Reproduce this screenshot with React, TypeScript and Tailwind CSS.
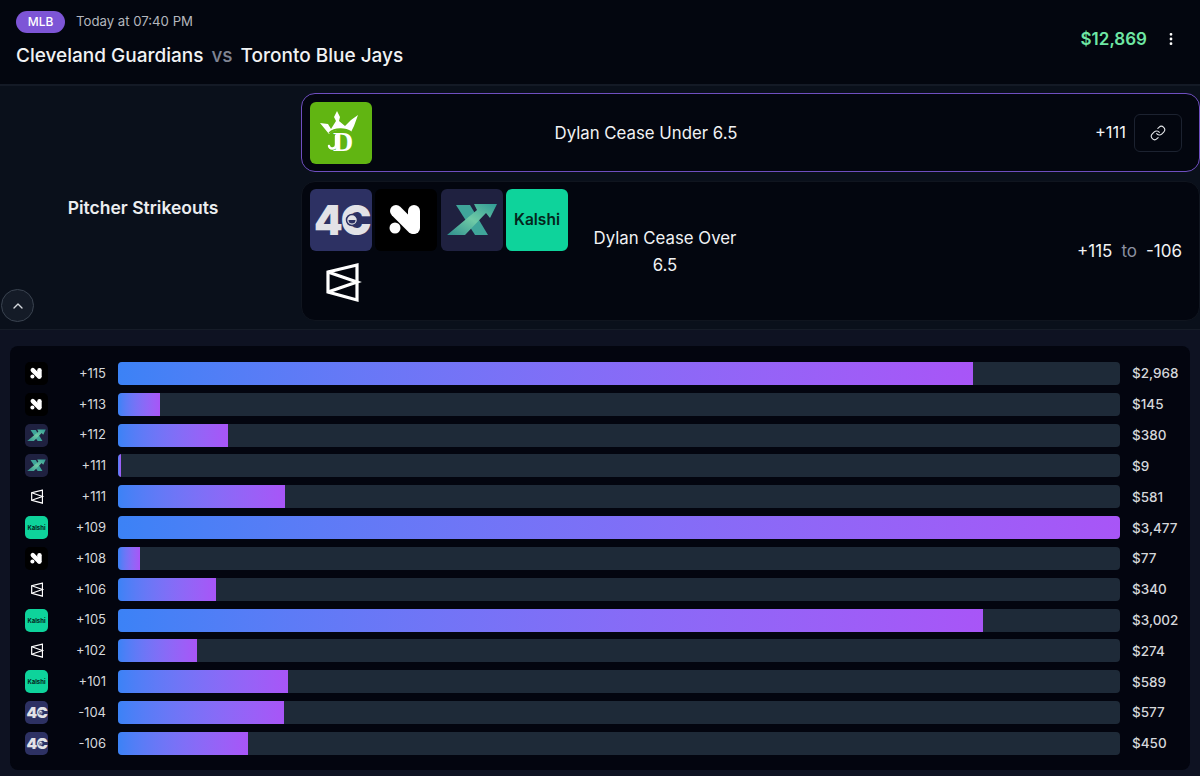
import { ChevronUp, Link, MoreVertical } from "lucide-react";

type Book = "fourc" | "novig" | "prophetx" | "kalshi" | "rebet";

const rows: { book: Book; odds: string; amount: number }[] = [
  { book: "novig", odds: "+115", amount: 2968 },
  { book: "novig", odds: "+113", amount: 145 },
  { book: "prophetx", odds: "+112", amount: 380 },
  { book: "prophetx", odds: "+111", amount: 9 },
  { book: "rebet", odds: "+111", amount: 581 },
  { book: "kalshi", odds: "+109", amount: 3477 },
  { book: "novig", odds: "+108", amount: 77 },
  { book: "rebet", odds: "+106", amount: 340 },
  { book: "kalshi", odds: "+105", amount: 3002 },
  { book: "rebet", odds: "+102", amount: 274 },
  { book: "kalshi", odds: "+101", amount: 589 },
  { book: "fourc", odds: "-104", amount: 577 },
  { book: "fourc", odds: "-106", amount: 450 },
];

const maxAmount = 3477;

/* ── Logos, all drawn on a 62 unit square ── */
function BookLogo({ book, small }: { book: Book; small?: boolean }) {
  const size = small ? "h-[23px] w-[23px] rounded-[5px]" : "h-[62px] w-[62px] rounded-[6px]";

  if (book === "fourc") {
    return (
      <svg className={`${size} shrink-0 bg-[#2d3163]`} viewBox="0 0 62 62">
        <text x="4" y="46" fontFamily="Inter, sans-serif" fontWeight="900" fontSize="41" letterSpacing="-2" fill="#e2e2e6">
          4C
        </text>
        <circle cx="42" cy="31" r="5.5" fill="#e2e2e6" stroke="#2d3163" strokeWidth="1.5" />
        <path d="M38.5 31h7a3.5 3.5 0 0 1-7 0z" fill="#2d3163" />
      </svg>
    );
  }
  if (book === "novig") {
    return (
      <svg className={`${size} shrink-0 bg-black`} viewBox="0 0 62 62">
        <line x1="21" y1="22" x2="38" y2="39" stroke="#fff" strokeWidth="12" strokeLinecap="round" />
        <line x1="39" y1="22" x2="39" y2="39" stroke="#fff" strokeWidth="12" strokeLinecap="round" />
        <circle cx="20" cy="39" r="5.5" fill="#fff" />
      </svg>
    );
  }
  if (book === "prophetx") {
    return (
      <svg className={`${size} shrink-0 bg-[#1f2140]`} viewBox="0 0 62 62">
        <defs>
          <linearGradient id="xBand" x1="0" y1="1" x2="1" y2="0">
            <stop offset="0" stopColor="#2f8f8e" />
            <stop offset="0.5" stopColor="#6fcaa6" />
            <stop offset="1" stopColor="#2f9a94" />
          </linearGradient>
        </defs>
        <polygon points="15,16 29,16 47,46 34,46" fill="#3fa59a" />
        <polygon points="6,46 36,21 33,15 56,15 49,29 45,24 24,46" fill="url(#xBand)" />
      </svg>
    );
  }
  if (book === "kalshi") {
    return (
      <div className={`${size} flex shrink-0 items-center justify-center bg-[#0ed39b]`}>
        <span className={small ? "text-[6px] font-bold text-[#04261c]" : "text-[15.5px] font-semibold text-[#04261c]"}>
          Kalshi
        </span>
      </div>
    );
  }
  return (
    <svg className={`${size} shrink-0`} viewBox="0 0 62 62" fill="none" stroke="#fff" strokeWidth="3.2" strokeLinejoin="miter">
      <path d="M47 14 18 21v20l29 8z" />
      <path d="M18 21 47 31 18 41" />
    </svg>
  );
}

function DraftKingsLogo() {
  return (
    <svg className="h-[62px] w-[62px] shrink-0 rounded-[6px] bg-[#61b512]" viewBox="0 0 62 62">
      <path
        d="M10 21l8 1 3 5 5-8-2-4 3-6 3 6-1 4 6 5 6-6 7-5-4 11-3 6c-7-4-17-3-22 2-3-4-6-7-9-11z"
        fill="#fff"
      />
      <path d="M19 31c6-5 16-5 22-1" fill="none" stroke="#61b512" strokeWidth="1.6" />
      <text x="33" y="49" textAnchor="middle" fontFamily="'Liberation Serif', serif" fontWeight="700" fontSize="28" fill="#fff">
        D
      </text>
      <path d="M26 34v9c0 4-6 5-7 1" fill="none" stroke="#fff" strokeWidth="2.4" strokeLinecap="round" />
    </svg>
  );
}

export default function App() {
  return (
    <div className="flex h-[776px] w-[1200px] flex-col overflow-hidden bg-[#0e1222] font-['Inter',sans-serif] text-white">
      {/* Header */}
      <div className="flex h-[86px] shrink-0 items-start justify-between border-b-2 border-[#141a26] bg-[#03060f] pl-4 pr-[21px] pt-[11px]">
        <div>
          <div className="flex items-center gap-[11px]">
            <span className="flex h-[22px] w-[49px] items-center justify-center rounded-full bg-[#7d55d6] text-[12px] font-medium">
              MLB
            </span>
            <span className="text-[13.2px] text-[#b4b7be]">Today at 07:40 PM</span>
          </div>
          <div className="mt-[10px] flex items-center gap-2 text-[19px] font-medium leading-[26px] text-[#f1f2f4]">
            <span>Cleveland Guardians</span>
            <span className="text-[#7f8493]">vs</span>
            <span>Toronto Blue Jays</span>
          </div>
        </div>
        <div className="mt-[17px] flex items-center gap-4">
          <span className="text-[17px] font-semibold leading-[22px] text-[#6ee7a4]">$12,869</span>
          <MoreVertical className="h-4 w-4 text-white" strokeWidth={2.2} />
        </div>
      </div>

      {/* Market */}
      <div className="relative flex h-[244px] shrink-0 border-b border-[#161c28] bg-[#0a101b] pb-[8px] pt-[7px]">
        <div className="flex w-[301px] shrink-0 items-start justify-center pt-[103px]">
          <span className="mr-[15px] text-[17.5px] font-semibold leading-[24px] text-[#eceef0]">Pitcher Strikeouts</span>
        </div>
        <div className="flex flex-1 flex-col gap-[9px]">
          <div className="flex h-[79px] items-center rounded-[14px] border border-[#6f4fc0] bg-[#03060f] pl-2 pr-[17px]">
            <DraftKingsLogo />
            <div className="w-[548px] pt-[2px] text-center text-[16.8px] text-[#f1f2f4]">Dylan Cease Under 6.5</div>
            <div className="ml-auto flex items-center gap-2">
              <span className="text-[16.5px] text-[#f1f2f4]">+111</span>
              <button className="flex h-[38px] w-[48px] items-center justify-center rounded-md border border-[#1c2230]">
                <Link className="h-4 w-4 text-[#e5e7eb]" strokeWidth={1.6} />
              </button>
            </div>
          </div>
          <div className="flex h-[140px] items-center rounded-[14px] border border-[#10151f] bg-[#03060f] pl-2 pr-[17px]">
            <div className="flex w-[262px] shrink-0 flex-wrap gap-x-[3.33px] self-start pt-[7px]">
              <BookLogo book="fourc" />
              <BookLogo book="novig" />
              <BookLogo book="prophetx" />
              <BookLogo book="kalshi" />
              <BookLogo book="rebet" />
            </div>
            <div className="ml-[13px] w-[160px] pt-[1px] text-center text-[16.8px] leading-[27px] text-[#f1f2f4]">
              Dylan Cease Over 6.5
            </div>
            <div className="ml-auto flex items-center gap-[9px] pt-[1px] text-[17px] text-[#f1f2f4]">
              <span>+115</span>
              <span className="text-[#8b90a0]">to</span>
              <span>-106</span>
            </div>
          </div>
        </div>
        <button className="absolute bottom-[7px] left-[1px] flex h-[33px] w-[33px] items-center justify-center rounded-full border border-[#3a4350] bg-[#141b27]">
          <ChevronUp className="h-4 w-4 text-[#d5d8dd]" strokeWidth={2} />
        </button>
      </div>

      {/* Volume by price */}
      <div className="px-[10px] pt-4">
        <div className="flex flex-col gap-[7.83px] rounded-lg bg-[#03050f] pb-[15px] pl-[15px] pr-[12px] pt-4">
          {rows.map((row, i) => (
            <div key={i} className="flex h-[23px] items-center">
              <BookLogo book={row.book} small />
              <span className="w-[58px] shrink-0 text-right text-[13px] text-[#d5d7db]">{row.odds}</span>
              <div className="ml-3 h-[23px] flex-1 overflow-hidden rounded-[4px] bg-[#1e2a38]">
                <div
                  className="h-full bg-gradient-to-r from-[#3b82f6] to-[#a855f7]"
                  style={{ width: `${(row.amount / maxAmount) * 100}%` }}
                />
              </div>
              <span className="ml-3 w-[46px] shrink-0 whitespace-nowrap text-[13.5px] font-medium text-[#d5d7db]">
                ${row.amount.toLocaleString("en-US")}
              </span>
            </div>
          ))}
        </div>
      </div>
    </div>
  );
}
